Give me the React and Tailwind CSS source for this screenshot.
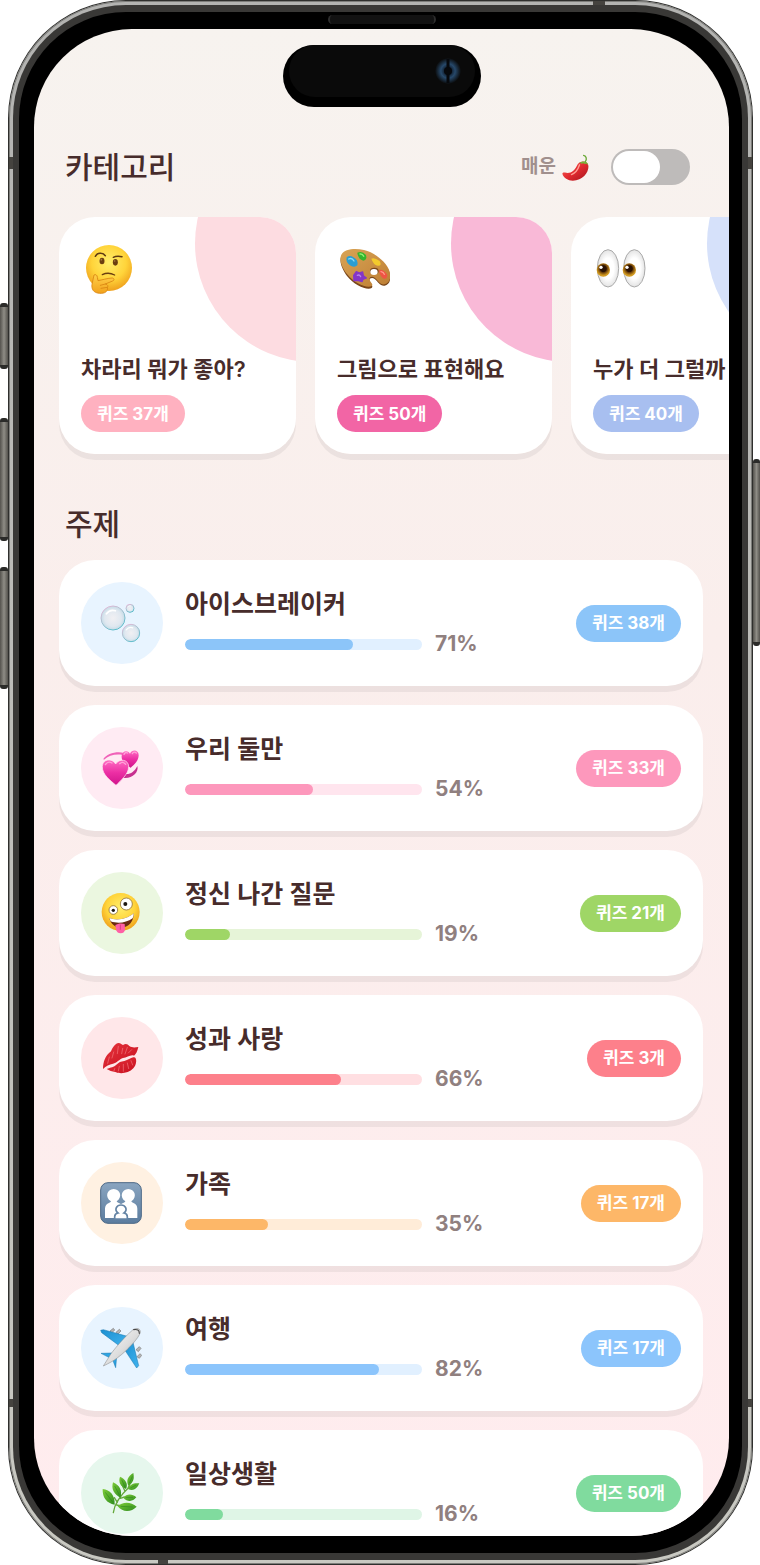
import React from "react";

function Thinking() {
  return (
    <svg viewBox="0 0 150 150" className="size-[50px]" aria-hidden="true">
      <defs>
        <radialGradient id="face" cx="50%" cy="38%" r="62%">
          <stop offset="0" stopColor="#ffee6b" />
          <stop offset=".6" stopColor="#ffd43a" />
          <stop offset="1" stopColor="#efa01c" />
        </radialGradient>
        <linearGradient id="hand" x1="0" y1="0" x2="0" y2="1">
          <stop offset="0" stopColor="#ffd04a" />
          <stop offset="1" stopColor="#f2a21c" />
        </linearGradient>
      </defs>
      <circle cx="75" cy="72" r="69" fill="url(#face)" />
      <ellipse cx="54" cy="51" rx="7.5" ry="10" fill="#6b3f10" />
      <ellipse cx="94" cy="55" rx="7.5" ry="10" fill="#6b3f10" />
      <circle cx="52" cy="47" r="2.5" fill="#a87b45" />
      <circle cx="92" cy="51" r="2.5" fill="#a87b45" />
      <path d="M34 37q6-11 17-9q8 1 13 7" fill="none" stroke="#5f3a12" strokeWidth="4.5" strokeLinecap="round" />
      <path d="M88 40q9-5 26-2" fill="none" stroke="#5f3a12" strokeWidth="4.5" strokeLinecap="round" />
      <path d="M55 92q18-9 37 1" fill="none" stroke="#6b3f10" strokeWidth="4" strokeLinecap="round" />
      <path
        d="M30 93c4-3 10 0 10 7l2 10c12-2 26-7 42-8c7 0 8 7 2 9l-22 9c8 2 9 6 6 10c3 14-10 19-23 18c-19-1-25-13-23-27z"
        fill="url(#hand)"
        stroke="#d98411"
        strokeWidth="2.5"
        strokeLinejoin="round"
      />
      <path d="M64 120l-15 4M70 130l-19 3" stroke="#d98411" strokeWidth="2.5" strokeLinecap="round" />
    </svg>
  );
}

function Palette() {
  return (
    <svg viewBox="0 0 150 150" className="size-[50px]" aria-hidden="true">
      <defs>
        <linearGradient id="wood" x1="0" y1="0" x2="1" y2="1">
          <stop offset="0" stopColor="#d9a455" />
          <stop offset="1" stopColor="#bd7e34" />
        </linearGradient>
      </defs>
      <g transform="translate(0 16)">
        <path
          d="M4 20C14 2 46 0 72 6c34 8 68 38 76 62c7 22 0 38-14 41c-14 2-20-12-30-20c-8-6-18-2-15 7c3 8 12 13 6 20c-14 8-52-8-74-36C8 62-4 38 4 20z"
          fill="#7a471a"
        />
        <path
          d="M4 16C14-2 46-4 72 2c34 8 68 38 76 62c7 22 0 38-14 41c-14 2-20-12-30-20c-8-6-18-2-15 7c3 8 12 13 6 18c-14 8-52-8-74-36C8 58-4 34 4 16z"
          fill="url(#wood)"
        />
        <ellipse cx="103" cy="65" rx="13" ry="10" fill="#7a471a" />
        <ellipse cx="102" cy="68" rx="11" ry="9" fill="#fff" />
        <path d="M20 24q9-8 20 0q16 8 12 24q-8 8-20 1q-16-9-12-25z" fill="#2a9ed2" />
        <path d="M26 29q10-5 16 6" stroke="#8bdcf5" strokeWidth="4" fill="none" strokeLinecap="round" />
        <path d="M52 10q14-7 26 7q4 16-8 17q-16-4-18-24z" fill="#35b52d" />
        <path d="M60 14q8-1 11 7" stroke="#91ef72" strokeWidth="4" fill="none" strokeLinecap="round" />
        <path d="M94 28q9-5 25 7q8 15-6 14q-13-3-19-21z" fill="#f3ca2c" />
        <path d="M117 62q13-3 25 14q0 14-11 12q-12-7-14-26z" fill="#ee5545" />
        <path d="M123 67q8 1 10 8" stroke="#ff9b8b" strokeWidth="4" fill="none" strokeLinecap="round" />
        <path d="M41 78l8-11l10 4l9-3l2 11l9 7l-10 4l-3 7l-13-4l-11 1z" fill="#8436c7" stroke="#8436c7" strokeWidth="4" strokeLinejoin="round" />
        <path d="M52 78q7-3 10 4" stroke="#bb83ed" strokeWidth="4" fill="none" strokeLinecap="round" />
      </g>
    </svg>
  );
}

function Eyes() {
  return (
    <svg viewBox="0 0 150 150" className="size-[50px]" aria-hidden="true">
      <defs>
        <radialGradient id="eyeball">
          <stop offset=".55" stopColor="#fff" />
          <stop offset="1" stopColor="#e3e3e3" />
        </radialGradient>
        <radialGradient id="iris" cy="40%">
          <stop offset=".45" stopColor="#2a1203" />
          <stop offset=".6" stopColor="#70420a" />
          <stop offset="1" stopColor="#d29a20" />
        </radialGradient>
      </defs>
      <ellipse cx="36" cy="73" rx="32" ry="56" fill="url(#eyeball)" stroke="#aaa" strokeWidth="3" />
      <ellipse cx="115" cy="73" rx="32" ry="56" fill="url(#eyeball)" stroke="#aaa" strokeWidth="3" />
      <circle cx="22" cy="78" r="20" fill="url(#iris)" />
      <circle cx="100" cy="78" r="20" fill="url(#iris)" />
      <circle cx="15" cy="70" r="5" fill="#fff" />
      <circle cx="93" cy="70" r="5" fill="#fff" />
    </svg>
  );
}

function Chili() {
  return (
    <svg viewBox="0 0 80 80" className="size-[27px]" aria-hidden="true">
      <defs>
        <linearGradient id="chili" x1="0" y1="0" x2="1" y2="1">
          <stop offset="0" stopColor="#ff6a5c" />
          <stop offset=".5" stopColor="#e22b30" />
          <stop offset="1" stopColor="#a5141d" />
        </linearGradient>
      </defs>
      <path d="M46 31C54 18 76 20 78 34c3 18-15 45-46 45C18 79 4 72 1 58c1-4 5-4 8-3c16 5 29-6 37-24z" fill="url(#chili)" />
      <path d="M52 32c-5 16-13 25-24 29" stroke="#ff9d92" strokeWidth="4" strokeLinecap="round" fill="none" />
      <path d="M50 27c5-3 9-5 15-5c7 0 12 4 13 11c-4-3-6-5-10-3c-3-4-7-3-10-1c-3-2-5-2-8-2z" fill="#75b83b" />
      <path d="M69 23c5-8 4-17-5-19" stroke="#6aa836" strokeWidth="4" strokeLinecap="round" fill="none" />
    </svg>
  );
}

function Bubble({ cx, cy, r }) {
  return (
    <g>
      <circle cx={cx} cy={cy} r={r} fill="url(#bubble)" stroke="url(#rim)" strokeWidth="3" />
      <path
        d={`M${cx - r * 0.55} ${cy - r * 0.35}q${r * 0.3} ${-r * 0.4} ${r * 0.75} ${-r * 0.25}`}
        stroke="#fff"
        strokeWidth={r * 0.14}
        strokeLinecap="round"
        fill="none"
      />
    </g>
  );
}

function Bubbles() {
  return (
    <svg viewBox="0 0 126 126" className="size-[42px]" aria-hidden="true">
      <defs>
        <radialGradient id="bubble">
          <stop offset="0" stopColor="#f1f0f3" />
          <stop offset=".7" stopColor="#e0e8f0" />
          <stop offset="1" stopColor="#c4dbe6" />
        </radialGradient>
        <linearGradient id="rim" x1="0" y1="0" x2=".6" y2="1">
          <stop offset="0" stopColor="#f5b3d8" />
          <stop offset=".45" stopColor="#b3c0d0" />
          <stop offset="1" stopColor="#5cbccb" />
        </linearGradient>
      </defs>
      <Bubble cx={39} cy={48} r={36} />
      <Bubble cx={93} cy={93} r={26} />
      <Bubble cx={90} cy={19} r={12} />
    </svg>
  );
}

function Hearts() {
  return (
    <svg viewBox="0 0 126 126" className="size-[42px]" aria-hidden="true">
      <defs>
        <linearGradient id="heart" x1="0" y1="0" x2="0" y2="1">
          <stop offset="0" stopColor="#ff6cc2" />
          <stop offset=".5" stopColor="#ec2fa4" />
          <stop offset="1" stopColor="#d0148b" />
        </linearGradient>
      </defs>
      <path d="M10 36C20 20 50 12 72 18l-4 6C46 20 26 26 12 38z" fill="#f062b8" />
      <path d="M112 57c6 20-20 42-46 35l10-11c14 2 28-7 36-24z" fill="#c7308f" />
      <path d="M92 62C78 55 63 43 65 26C67 12 82 8 90 20C96 6 117 8 116 26C115 41 104 52 92 62z" fill="url(#heart)" />
      <path d="M72 22q4-8 11-4M97 20q5-8 12-2" stroke="#ffa2d9" strokeWidth="4" fill="none" strokeLinecap="round" />
      <path d="M48 115C32 101 6 83 7 58C8 36 36 32 47 51C58 33 86 37 86 59C85 83 63 99 48 115z" fill="url(#heart)" stroke="#ffebf3" strokeWidth="2" />
      <path d="M16 53q8-12 20-5M59 50q9-9 18 2" stroke="#ffa2d9" strokeWidth="4" fill="none" strokeLinecap="round" />
    </svg>
  );
}

function Zany() {
  return (
    <svg viewBox="0 0 126 126" className="size-[42px]" aria-hidden="true">
      <circle cx="62" cy="60" r="57" fill="url(#face)" />
      <path d="M28 78C50 87 82 81 101 64C102 87 87 106 65 107C45 107 32 96 28 78z" fill="#6b2b13" />
      <path d="M28 78C50 87 82 81 101 64C101 70 100 75 98 79C78 93 53 96 32 88z" fill="#fff" />
      <path d="M46 99c8-5 18-6 28-3l1 14c0 9-5 14-13 14s-13-5-14-13z" fill="#ff5fa6" />
      <path d="M61 99v13" stroke="#d93c84" strokeWidth="3" strokeLinecap="round" />
      <circle cx="79" cy="36" r="18" fill="#fff" stroke="#93743a" strokeWidth="2.5" />
      <circle cx="40" cy="54" r="13" fill="#fff" stroke="#93743a" strokeWidth="2.5" />
      <circle cx="76" cy="36" r="6" fill="#1c1712" />
      <circle cx="40" cy="55" r="5" fill="#1c1712" />
    </svg>
  );
}

function Lips() {
  return (
    <svg viewBox="0 0 126 126" className="size-[42px]" aria-hidden="true">
      <defs>
        <linearGradient id="lips" x1="0" y1="0" x2="1" y2="1">
          <stop offset="0" stopColor="#e6343c" />
          <stop offset="1" stopColor="#c70f1f" />
        </linearGradient>
      </defs>
      <path d="M9 96C9 74 16 56 33 43C38 30 46 19 56 18C61 18 65 22 69 24C76 19 83 20 88 27C97 33 106 31 115 30C112 44 108 51 102 56C91 52 81 63 69 63C58 66 50 79 39 80C28 82 18 87 9 96z" fill="url(#lips)" />
      <path d="M20 96C32 90 42 91 49 83C57 76 62 73 73 72C84 69 91 63 100 61C112 58 111 83 100 94C86 109 61 112 46 105C36 104 28 101 20 96z" fill="url(#lips)" />
      <path
        d="M41 45l-5 18M55 28l-3 22M68 34l-3 16M82 31l-7 20M95 38l-10 10M28 60l-5 19M58 88l-3 14M70 82v21M82 78l4 17M93 71l5 13M44 95l-2 6"
        stroke="#f3757b"
        strokeWidth="2"
        strokeLinecap="round"
      />
    </svg>
  );
}

function Family() {
  return (
    <svg viewBox="0 0 126 126" className="size-[42px]" aria-hidden="true">
      <defs>
        <linearGradient id="tile" x1="0" y1="0" x2="0" y2="1">
          <stop offset="0" stopColor="#8aa5c0" />
          <stop offset="1" stopColor="#5b7c9e" />
        </linearGradient>
      </defs>
      <rect x="2" y="2" width="122" height="122" rx="22" fill="url(#tile)" stroke="#4c6987" strokeWidth="3" />
      <path d="M15 108V80q0-14 13-18q5-1 5-4C14 47 20 21 41 21s27 26 9 37q0 3 5 4q6 2 8 5q2-3 8-5q5-1 5-4C58 47 64 21 85 21s27 26 9 37q0 3 5 4q13 4 13 18v28z" fill="#fff" />
      <path
        d="M44 111v-7q0-9 10-11q-9-7-5-16q4-8 14-8t14 8q4 9-5 16q10 2 10 11v7z"
        fill="#fff"
        stroke="#6484a5"
        strokeWidth="5"
      />
    </svg>
  );
}

function Plane() {
  return (
    <svg viewBox="0 0 126 126" className="size-[42px]" aria-hidden="true">
      <defs>
        <linearGradient id="hull" x1="0" y1="0" x2="1" y2="1">
          <stop offset="0" stopColor="#fff" />
          <stop offset=".55" stopColor="#dcdcdc" />
          <stop offset="1" stopColor="#929292" />
        </linearGradient>
        <linearGradient id="wing" x1="0" y1="0" x2="1" y2="1">
          <stop offset="0" stopColor="#1c8fd0" />
          <stop offset="1" stopColor="#3fb3ef" />
        </linearGradient>
      </defs>
      <g fill="#b5b5b5" stroke="#787878" strokeWidth="2">
        <path d="M30 12l10-8 4 5-9 9zM48 16l10-9 5 5-10 10zM115 74l8-10-5-5-10 9zM118 94l7-9-5-5-9 9z" />
      </g>
      <g stroke="#1774ad" strokeWidth="1.5" strokeLinejoin="round">
        <path d="M2 10l8-2 72 20-23 29L5 17z" fill="url(#wing)" />
        <path d="M98 42l18 74-6 7-35-53z" fill="url(#wing)" />
        <path d="M3 79l34-1-5 16z" fill="#2da4e3" />
        <path d="M36 93l11 29 3-33z" fill="#2da4e3" />
      </g>
      <path d="M10 117L33 80C50 58 76 27 99 8c11-7 23-4 22 8c-3 15-36 52-68 76c-12 9-26 17-43 25z" fill="url(#hull)" stroke="#858585" strokeWidth="1.5" />
      <path d="M101 8q17-3 17 11" fill="none" stroke="#474747" strokeWidth="3.5" strokeLinecap="round" />
    </svg>
  );
}

function Herb() {
  return (
    <svg viewBox="0 0 126 126" className="size-[42px]" aria-hidden="true">
      <defs>
        <linearGradient id="leaf" x1="0" y1="0" x2="1" y2="1">
          <stop offset="0" stopColor="#7ccb37" />
          <stop offset="1" stopColor="#2f8d1f" />
        </linearGradient>
      </defs>
      <path d="M40 122C43 98 58 73 90 43M52 91L43 77M62 74L53 51M75 58L65 36M84 48l9-19M50 99l13 3M61 79l12-4" stroke="#65a83b" strokeWidth="4" fill="none" strokeLinecap="round" />
      <g fill="url(#leaf)">
        <path d="M8 51c22 3 37 18 36 47C20 94 7 77 8 51z" />
        <path d="M39 31c20 9 29 25 22 46C42 67 33 51 39 31z" />
        <path d="M60 14c17 8 25 21 18 37C62 43 54 31 60 14z" />
        <path d="M100 3c4 18-1 30-15 38C78 26 83 13 100 3z" />
        <path d="M118 34c-8 19-20 24-34 17c5-13 16-19 34-17z" />
        <path d="M109 76c-11 14-27 14-39 1c10-12 26-13 39-1z" />
        <path d="M110 104c-16 17-42 18-57-1c14-14 39-15 57 1z" />
      </g>
      <path d="M16 61l22 29M44 42l14 27M65 23l10 22M97 13l-9 21M108 39l-17 9M99 76H77M98 105l-36-2" stroke="#277d1c" strokeWidth="1.5" fill="none" />
    </svg>
  );
}

const categories = [
  { title: "차라리 뭐가 좋아?", count: 37, Icon: Thinking, circle: "bg-[#fddce1]", badge: "bg-[#ffb1c0]" },
  { title: "그림으로 표현해요", count: 50, Icon: Palette, circle: "bg-[#f9b9d7]", badge: "bg-[#f265a5]" },
  { title: "누가 더 그럴까", count: 40, Icon: Eyes, circle: "bg-[#d6e1fa]", badge: "bg-[#a8bff0]" },
];

const topics = [
  { title: "아이스브레이커", percent: 71, count: 38, Icon: Bubbles, tint: "bg-[#e8f4ff]", track: "bg-[#e1f0ff]", solid: "bg-[#8cc5f9]" },
  { title: "우리 둘만", percent: 54, count: 33, Icon: Hearts, tint: "bg-[#ffebf3]", track: "bg-[#ffe5ee]", solid: "bg-[#fd98bc]" },
  { title: "정신 나간 질문", percent: 19, count: 21, Icon: Zany, tint: "bg-[#ebf7e0]", track: "bg-[#e6f4d8]", solid: "bg-[#9fd666]" },
  { title: "성과 사랑", percent: 66, count: 3, Icon: Lips, tint: "bg-[#ffe7e9]", track: "bg-[#ffdfe2]", solid: "bg-[#fd808b]" },
  { title: "가족", percent: 35, count: 17, Icon: Family, tint: "bg-[#fff1e2]", track: "bg-[#ffecd8]", solid: "bg-[#fdb768]" },
  { title: "여행", percent: 82, count: 17, Icon: Plane, tint: "bg-[#e8f4ff]", track: "bg-[#e1f0ff]", solid: "bg-[#8cc5fc]" },
  { title: "일상생활", percent: 16, count: 50, Icon: Herb, tint: "bg-[#e6f7ed]", track: "bg-[#dff5e6]", solid: "bg-[#80db9e]" },
];

function Badge({ color, count }) {
  return (
    <span className={`inline-flex h-[37px] shrink-0 items-center rounded-full px-4 pt-[2px] text-[17px] font-bold whitespace-nowrap text-white ${color}`}>
      퀴즈 {count}개
    </span>
  );
}

function CategoryCard({ title, count, Icon, circle, badge }) {
  return (
    <li className="shrink-0 rounded-[36px] shadow-[0_6px_0_rgba(0,0,0,0.055)]">
      <div className="relative flex size-[237px] flex-col overflow-hidden rounded-[36px] bg-white p-[22px]">
        <span className={`absolute -top-[92px] left-[136px] size-[237px] rounded-full ${circle}`} />
        <span className="flex h-[60px] w-14 items-center justify-center">
          <Icon />
        </span>
        <h3 className="relative mt-auto mb-2 text-[22px] leading-9 font-semibold whitespace-nowrap">{title}</h3>
        <div className="flex">
          <Badge color={badge} count={count} />
        </div>
      </div>
    </li>
  );
}

function TopicRow({ title, percent, count, Icon, tint, track, solid }) {
  return (
    <li className="flex h-[126px] shrink-0 items-center gap-[22px] rounded-[36px] bg-white px-[22px] shadow-[0_6px_0_rgba(0,0,0,0.055)]">
      <span className={`flex size-[82px] shrink-0 items-center justify-center rounded-full pr-[2px] ${tint}`}>
        <Icon />
      </span>
      <div className="min-w-0 flex-1 pb-1">
        <h3 className="mb-1.5 text-[25px] leading-10 font-semibold">{title}</h3>
        <div className="flex items-center gap-[13px]">
          <div
            role="progressbar"
            aria-label={title}
            aria-valuenow={percent}
            className={`h-[11px] w-[237px] overflow-hidden rounded-full ${track}`}
          >
            <div className={`h-full rounded-full ${solid}`} style={{ width: `${percent}%` }} />
          </div>
          <span className="text-[21px] leading-7 font-bold text-[#90807f]">{percent}%</span>
        </div>
      </div>
      <Badge color={solid} count={count} />
    </li>
  );
}

function SideButton({ size }) {
  return (
    <span className={`block w-full rounded-[3px] border-y-4 border-[#2b2b29] bg-linear-to-r from-[#55534e] via-[#8f8d86] to-[#55534e] ${size}`} />
  );
}

function Notch({ place }) {
  return <span className={`absolute bg-[#45433f] ${place}`} />;
}

export default function App() {
  return (
    <div className="flex h-screen bg-white font-[Inter,'Noto_Sans_CJK_KR',sans-serif] text-[#472c2b]">
      <div className="w-2 shrink-0 pt-[303px]">
        <SideButton size="h-[66px]" />
        <div className="h-[49px]" />
        <SideButton size="h-[123px]" />
        <div className="h-[26px]" />
        <SideButton size="h-[122px]" />
      </div>

      <div className="relative min-w-0 flex-1 rounded-[118px] bg-[#2f2f2d] p-px">
        <div className="h-full rounded-[117px] bg-linear-to-b from-[#b3b3b1] to-[#c9c9c2] p-1 shadow-[inset_0_0_0_1px_#7d7d7a]">
          <div className="h-full rounded-[113px] bg-[#393836] px-[6px] py-[7px]">
            <div className="flex h-full flex-col rounded-[107px] bg-black pr-[13px] pb-[17px] pl-[15px]">
              <div className="flex h-[17px] shrink-0 justify-center pt-[3px]">
                <span className="h-[9px] w-[108px] rounded-full border-x-2 border-[#2d2d2d] bg-[#121212]" />
              </div>
              <main className="flex min-h-0 flex-1 flex-col overflow-hidden rounded-[98px] bg-linear-to-b from-[#f7f3ef] via-[#faeeec] via-40% to-[#ffecee]">
                <div className="mx-auto mt-4 flex h-[62px] w-[198px] shrink-0 rounded-full bg-black px-1.5 pb-2.5">
                  <div className="flex flex-1 items-center justify-end rounded-full bg-[#0a0a0a] pr-3.5">
                    <svg viewBox="0 0 26 26" className="size-[26px]" aria-hidden="true">
                      <defs>
                        <radialGradient id="lens">
                          <stop offset=".2" stopColor="#0b1420" />
                          <stop offset=".55" stopColor="#27496b" />
                          <stop offset="1" stopColor="#0a0a0a" />
                        </radialGradient>
                      </defs>
                      <circle cx="13" cy="13" r="13" fill="url(#lens)" />
                      <path d="M13 1v24" stroke="#06080c" strokeWidth="3" />
                      <circle cx="13" cy="13" r="4" fill="#06080c" />
                    </svg>
                  </div>
                </div>

                <header className="mt-[42px] flex h-9 shrink-0 items-center pr-[39px] pl-[31px]">
                  <h1 className="flex-1 text-[30px] leading-9 font-medium">카테고리</h1>
                  <label htmlFor="spicy" className="mr-[22px] flex items-center gap-1.5 text-[19px] font-bold text-[#a08f8d]">
                    매운
                    <Chili />
                  </label>
                  <input
                    id="spicy"
                    type="checkbox"
                    role="switch"
                    className="h-9 w-[79px] appearance-none rounded-full bg-[#bebbba] p-[2px] before:block before:h-8 before:w-[47px] before:rounded-full before:bg-white checked:bg-[#fd808b] checked:before:ml-auto"
                  />
                </header>

                <ul className="mt-8 flex shrink-0 gap-[19px] overflow-x-auto pb-2 pl-[25px] [scrollbar-width:none]">
                  {categories.map((c) => (
                    <CategoryCard key={c.title} {...c} />
                  ))}
                </ul>

                <h2 className="mt-11 mb-[18px] shrink-0 pl-[31px] text-[30px] leading-9 font-medium">주제</h2>

                <ul className="flex min-h-0 flex-1 flex-col gap-[19px] overflow-y-auto pr-[26px] pl-[25px] [scrollbar-width:none]">
                  {topics.map((t) => (
                    <TopicRow key={t.title} {...t} />
                  ))}
                </ul>
              </main>
            </div>
          </div>
        </div>
        <Notch place="top-px left-[585px] h-1 w-3" />
        <Notch place="bottom-px left-[150px] h-1 w-2.5" />
        <Notch place="top-[157px] left-px h-3 w-1" />
        <Notch place="top-[157px] right-px h-3 w-1" />
        <Notch place="bottom-[158px] left-px h-2 w-1" />
        <Notch place="right-px bottom-[158px] h-2 w-1" />
      </div>

      <div className="w-[7px] shrink-0 pt-[459px]">
        <SideButton size="h-[187px]" />
      </div>
    </div>
  );
}
